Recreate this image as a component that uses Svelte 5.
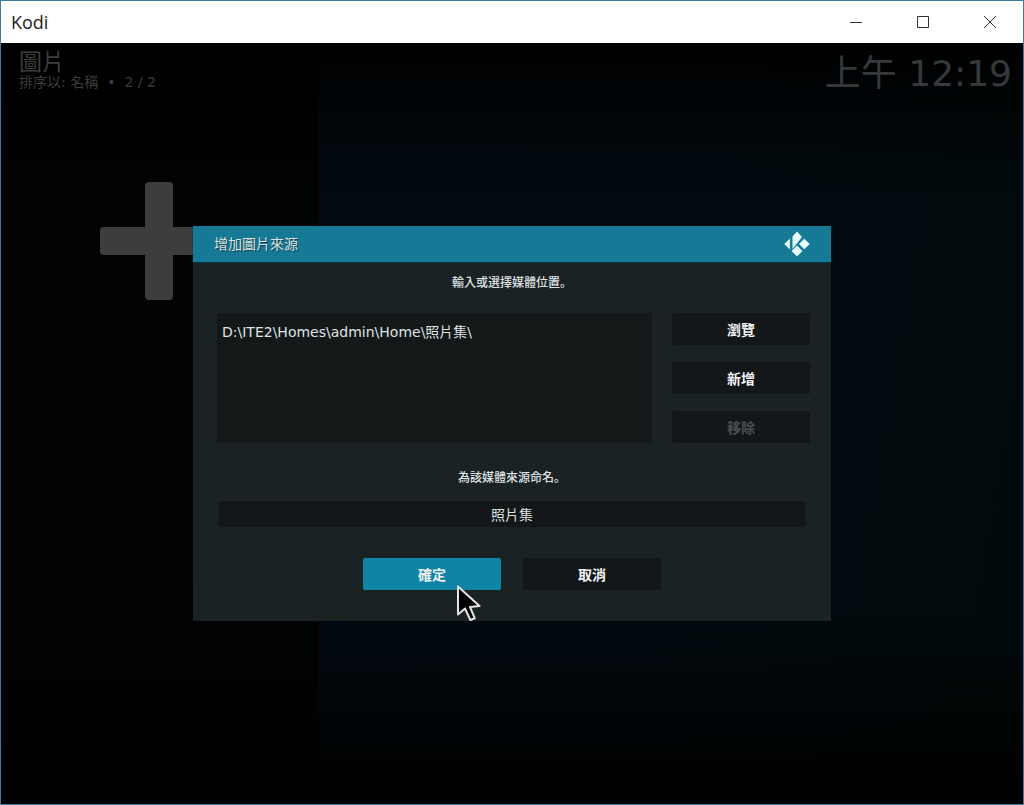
<script lang="ts">
	interface Source_Action {
		label: string;
		disabled?: boolean;
	}

	const actions: Array<Source_Action> = [
		{label: '瀏覽'},
		{label: '新增'},
		{label: '移除', disabled: true},
	];

	const paths = ['D:\\ITE2\\Homes\\admin\\Home\\照片集\\'];

	let name = $state('照片集');
</script>

<div class="window">
	<header class="titlebar">
		<span class="app_name">Kodi</span>
		<div class="window_controls">
			<button type="button" aria-label="Minimize">
				<svg viewBox="0 0 14 14"><path d="M1 7.5h12" /></svg>
			</button>
			<button type="button" aria-label="Maximize">
				<svg viewBox="0 0 14 14"><path d="M1.5 1.5h11v11h-11z" /></svg>
			</button>
			<button type="button" aria-label="Close">
				<svg viewBox="0 0 14 14"><path d="M1 1l12 12M13 1L1 13" /></svg>
			</button>
		</div>
	</header>

	<main class="stage">
		<section class="panel">
			<h1>圖片</h1>
			<p class="sorting"><span>排序以: 名稱</span><span>•</span><span>2 / 2</span></p>
			<svg class="plus" viewBox="0 0 118 118">
				<rect x="45" width="28" height="118" rx="4" />
				<rect y="45" width="118" height="28" rx="4" />
			</svg>
		</section>
		<section class="content">
			<time class="clock">上午 12:19</time>
		</section>

		<div class="overlay">
			<form class="dialog" aria-labelledby="dialog_title" onsubmit={(e) => e.preventDefault()}>
				<header class="dialog_header">
					<h2 id="dialog_title">增加圖片來源</h2>
					<svg class="logo" viewBox="0 0 26 26">
						<path d="M13 0.500L18 6L8.500 18V5.500z" />
						<path d="M5.800 7.500V18.500L0.300 13z" />
						<path d="M20.300 7.800L25.700 13L20.300 18.200L15 13z" />
						<path d="M13 14.600L18.400 20L13 25.500L7.600 20z" />
					</svg>
				</header>

				<div class="dialog_body">
					<p class="hint" lang="ja">輸入或選擇媒體位置。</p>
					<div class="sources">
						<ul class="paths">
							{#each paths as path (path)}
								<li>{path}</li>
							{/each}
						</ul>
						<div class="actions">
							{#each actions as action (action.label)}
								<button type="button" class="button" disabled={action.disabled}>{action.label}</button>
							{/each}
						</div>
					</div>

					<label class="hint" for="source_name">為該媒體來源命名。</label>
					<input id="source_name" class="name" type="text" bind:value={name} />

					<div class="buttons">
						<div class="confirm">
							<button type="submit" class="button primary">確定</button>
							<svg class="pointer" viewBox="0 0 24 36">
								<path d="M1 1.500V29.500L8 23.500L13.300 35L17.800 33.300L13 22L22.500 21z" />
							</svg>
						</div>
						<button type="button" class="button">取消</button>
					</div>
				</div>
			</form>
		</div>
	</main>
</div>

<style>
	:global(body) {
		margin: 0;
	}

	.window {
		box-sizing: border-box;
		display: flex;
		flex-direction: column;
		min-height: 100vh;
		border: 1px solid #3f7aa3;
		background: #000;
		font-family: 'DejaVu Sans', 'Noto Sans CJK TC', sans-serif;
		font-size: 14px;
	}

	h1,
	h2,
	p,
	ul {
		margin: 0;
		padding: 0;
		font-weight: 400;
	}

	button,
	input {
		font: inherit;
		border: 0;
	}

	.titlebar {
		display: flex;
		justify-content: space-between;
		align-items: center;
		height: 42px;
		padding-left: 10px;
		background: #fff;
		color: #222;
	}

	.app_name {
		font-family: 'Open Sans', sans-serif;
		font-size: 18px;
		line-height: 24px;
	}

	.window_controls {
		display: flex;
	}

	.window_controls button {
		display: grid;
		place-items: center;
		width: 67px;
		height: 42px;
		padding: 0;
		background: none;
	}

	.window_controls svg {
		width: 14px;
		height: 14px;
		fill: none;
		stroke: #333;
	}

	.stage {
		position: relative;
		flex: 1;
		display: grid;
		grid-template-columns: 31% 1fr;
	}

	.panel {
		display: flex;
		flex-direction: column;
		padding: 6px 18px 0;
		background: linear-gradient(#000, #020304 30%, #020303 70%, #000);
		color: #3d3d3d;
	}

	h1 {
		font-size: 23px;
		line-height: 26px;
	}

	.sorting {
		display: flex;
		gap: 9px;
		line-height: 15px;
	}

	.plus {
		align-self: center;
		width: 118px;
		height: 118px;
		margin-top: 92px;
		fill: #3d3d3d;
	}

	.content {
		padding: 8px 11px;
		background:
			linear-gradient(#000, transparent 20%, transparent 75%, #000 98%),
			linear-gradient(100deg, #010a11, #010a10 50%, #010a0b);
		color: #35393b;
		text-align: right;
	}

	.clock {
		font-size: 36px;
		line-height: 46px;
	}

	.overlay {
		position: absolute;
		inset: 0;
		display: grid;
		place-items: center;
	}

	.dialog {
		width: 100%;
		max-width: 638px;
		background: #1b2224;
		color: #dfe3e4;
	}

	.dialog_header {
		display: flex;
		justify-content: space-between;
		align-items: center;
		height: 36px;
		padding: 0 21px;
		background: #167a96;
		box-shadow: 0 1px 1px #0e2f3d;
	}

	h2 {
		font-size: 14px;
		line-height: 20px;
		text-shadow: 1px 1px 1px #0a3a48;
	}

	.logo {
		width: 26px;
		height: 26px;
		fill: #e9ffff;
	}

	.dialog_body {
		display: flex;
		flex-direction: column;
		padding: 8px 24px 31px;
	}

	/* the JP face sets the full stop at the lower left */
	.hint {
		font-family: 'Noto Sans CJK JP', sans-serif;
		font-size: 12px;
		font-weight: 500;
		line-height: 24px;
		text-align: center;
	}

	.sources {
		display: grid;
		grid-template-columns: 1fr 138px;
		gap: 20px;
		margin: 19px -3px 22px 0;
	}

	.paths {
		padding: 8px 5px;
		background: #141819;
		line-height: 22px;
		list-style: none;
	}

	.actions {
		display: flex;
		flex-direction: column;
		gap: 17px;
	}

	.button {
		width: 138px;
		height: 32px;
		padding: 0;
		border-radius: 2px;
		background: #141719;
		color: #f0f2f3;
		font-weight: 700;
	}

	.button:disabled {
		color: #4b4f50;
	}

	.primary {
		background: #0f84a5;
	}

	.name {
		height: 26px;
		margin: 12px 2px 31px;
		padding: 0;
		border-radius: 2px;
		background: #141719;
		color: inherit;
		text-align: center;
	}

	.buttons {
		display: flex;
		justify-content: center;
		gap: 22px;
	}

	.confirm {
		position: relative;
	}

	.pointer {
		position: absolute;
		top: 27px;
		left: 94px;
		width: 24px;
		height: 36px;
		overflow: visible;
		fill: #000;
		stroke: #e4e4e4;
		stroke-width: 2;
		stroke-linejoin: round;
		pointer-events: none;
	}
</style>
